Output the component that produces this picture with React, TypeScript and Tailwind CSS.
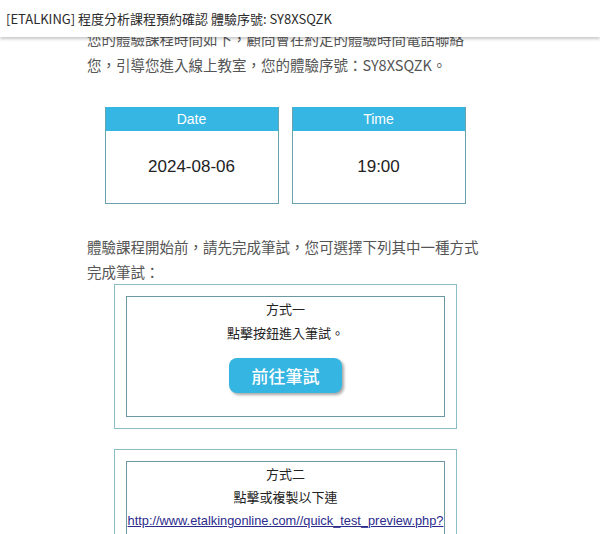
import React from 'react'

const cjk = "font-['Noto_Sans_CJK_TC','Noto_Sans',sans-serif]"

function InfoCell({ label, value }: { label: string; value: string }) {
  return (
    <div className="w-[174px] border border-[#6aa3b0] border-t-0">
      <div className="flex h-[24px] items-center justify-center bg-[#36b6e2] font-['Liberation_Sans',sans-serif] text-[14px] text-white">
        {label}
      </div>
      <div className="flex h-[72px] items-center justify-center font-['Liberation_Sans',sans-serif] text-[17px] text-[#222]">
        {value}
      </div>
    </div>
  )
}

function OptionBox({ children }: { children: React.ReactNode }) {
  return (
    <div className="mx-auto w-[343px] border border-[#8cbcc4] p-[11px]">
      <div className="border border-[#6d97a2] pt-[1px] text-center text-[13px] text-[#222]">{children}</div>
    </div>
  )
}

export default function App() {
  return (
    <div className="relative h-[534px] w-[600px] overflow-hidden bg-white">
      <div className="absolute inset-x-0 top-0 z-10 flex h-[37px] items-center bg-white pl-[6px] font-['Noto_Sans_CJK_TC',sans-serif] text-[13px] text-[#2a2a2a] shadow-[0_2px_3px_rgba(0,0,0,0.22)]">
        [ETALKING] 程度分析課程預約確認 體驗序號: SY8XSQZK
      </div>

      <div className={`ml-[87px] w-[400px] pt-[26px] ${cjk} text-[14.5px] text-[#555]`}>
        <p className="leading-[26px]">
          您的體驗課程時間如下，顧問會在約定的體驗時間電話聯絡您，引導您進入線上教室，您的體驗序號：SY8XSQZK。
        </p>

        <div className="mt-[29px] flex justify-center gap-[13px] pr-[4px]">
          <InfoCell label="Date" value="2024-08-06" />
          <InfoCell label="Time" value="19:00" />
        </div>

        <p className="mt-[30px] w-[395px] leading-[25px]">
          體驗課程開始前，請先完成筆試，您可選擇下列其中一種方式完成筆試：
        </p>

        <div className="flex flex-col gap-[20px] pr-[3px]">
          <OptionBox>
            <div className="leading-[22px]">方式一</div>
            <div className="mt-[2px] leading-[22px]">點擊按鈕進入筆試。</div>
            <div className="mt-[14px] mb-[23px] flex justify-center">
              <div className="flex h-[35px] w-[113px] items-center justify-center rounded-[8px] bg-[#35b5e1] text-[17px] font-medium text-white shadow-[2px_2px_3px_rgba(0,0,0,0.35)]">
                前往筆試
              </div>
            </div>
          </OptionBox>
          <OptionBox>
            <div className="leading-[22px]">方式二</div>
            <div className="mt-[1px] leading-[22px]">點擊或複製以下連</div>
            <a
              href="#"
              className="mt-[2px] mb-[24px] block font-['Liberation_Sans',sans-serif] text-[12.8px] leading-[22px] text-[#2b2b8c] underline"
            >
              http://www.etalkingonline.com//quick_test_preview.php?
            </a>
          </OptionBox>
        </div>
      </div>
    </div>
  )
}
